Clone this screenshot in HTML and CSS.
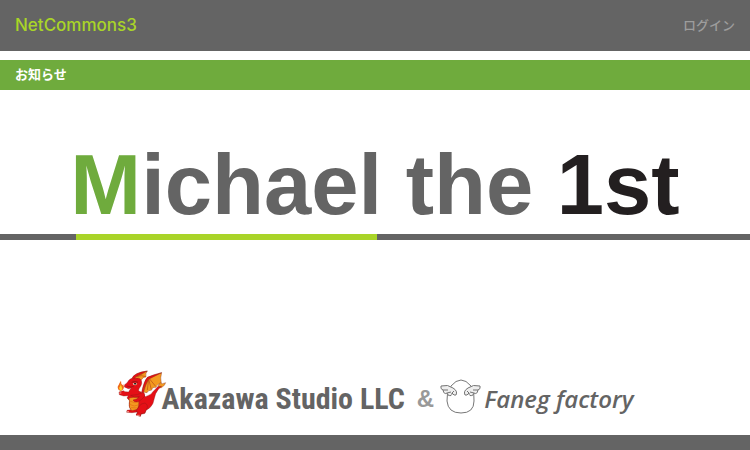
FILE: index.html
```html
<!DOCTYPE html>
<html lang="ja">
<head>
<meta charset="utf-8">
<meta name="viewport" content="width=device-width, initial-scale=1">
<title>NetCommons3</title>
<link rel="stylesheet" href="styles.css">
</head>
<body>
<header class="site-header">
  <a class="brand" href="#">NetCommons3</a>
  <nav><a class="login" href="#">ログイン</a></nav>
</header>
<main class="main">
  <h2 class="notice">お知らせ</h2>
  <section class="hero">
    <h1 class="title"><span class="initial">M</span>ichael the <span class="ordinal">1st</span></h1>
    <div class="rule"><div class="rule-accent"></div></div>
  </section>
  <section class="credits">
    <div class="credit">
      <svg class="dragon" viewBox="24 28 153 141" aria-hidden="true">
        <g stroke="#7b1a16" stroke-width="1" stroke-linejoin="round">
          <path fill="#f39a20" d="M74 53Q78 36 118 31Q112 37 114 49Q105 48 101 57L90 59Z"/>
          <path fill="#f39a20" d="M103 94Q109 60 119 50Q138 42 161 36Q156 51 160 68Q148 69 144 80Q134 77 130 89Q122 87 117 96Z"/>
          <path fill="#e50f16" d="M72 53Q78 36 118 31L89 46Q81 49 79 55ZM101 94Q108 61 118 50Q138 41 161 36Q139 47 123 55Q113 69 106 97Z"/>
          <path fill="#f39a20" d="M150 77L156 66L163 69L173 66L169 74L159 82Z"/>
          <path fill="#e50f16" d="M50 72Q57 69 63 58Q71 50 82 53Q94 49 100 59Q104 69 96 80Q91 85 92 91Q105 94 112 108Q129 103 134 94Q143 85 149 78L161 77Q149 85 143 99Q138 116 135 128Q129 142 114 149L111 158L99 161L97 167L85 163L88 154L72 156L56 155L57 149L69 147Q60 137 65 120L57 112L61 105L47 106L34 102L33 94L41 92L46 90L51 93L62 94Q64 88 70 82L61 84L49 79Z"/>
          <path fill="#f39a20" d="M63 112Q74 109 91 110L92 119Q94 136 88 146L72 150Q62 143 65 128Z"/>
          <path fill="#e50f16" d="M68 104Q89 104 105 95Q113 99 109 108Q101 118 90 123Q78 126 75 118Q86 117 94 108Q80 113 68 104Z"/>
          <path fill="#e50f16" d="M92 139Q98 127 111 127Q123 134 115 147L110 157L99 159L97 167L84 163L90 155L84 151Z"/>
        </g>
        <path d="M65 121L80 126 90 125M64 131L79 136 90 133M69 141L87 142" fill="none" stroke="#e56a13" stroke-width="2"/>
        <path d="M104 89L122 55 118 88M122 55L130 87M124 54L143 77M82 49L100 45 113 48M89 47L106 38" fill="none" stroke="#b94a17" stroke-width="2"/>
        <path d="M56 76L69 79 78 76" fill="none" stroke="#8b1918" stroke-width="2"/>
        <path d="M74 68L84 66 88 70 82 74 76 72Z" fill="#f6d0bb"/>
        <path d="M77 68L84 66 85 71 80 72Z" fill="#24211e"/>
        <path d="M71 65L81 62 90 65" fill="none" stroke="#721b18" stroke-width="2"/>
        <path d="M32 88Q26 79 32 73Q33 68 39 60Q38 70 45 74L45 69Q50 79 46 86L39 91Z" fill="#ef6919"/>
        <path d="M34 86Q32 80 37 76Q38 73 38 70Q42 81 43 85L39 90Z" fill="#ffd21f"/>
        <path d="M57 153h6M87 164h8M34 97h6" stroke="#ffe0c8" stroke-width="2"/>
      </svg>
      <span class="studio">Akazawa Studio LLC</span>
    </div>
    <span class="amp">&amp;</span>
    <div class="credit">
      <svg class="egg" viewBox="0 0 42 36" aria-hidden="true">
        <path fill="#fff" stroke="#777" d="M11 7Q16 1 21 1Q26 1 31 7Q35 14 34 22Q34 34 21 34Q8 34 7 22Q6 14 11 7Z"/>
        <g id="wing" fill="#eee" stroke="#747474">
          <path d="M1 7Q8 5 13 9Q18 12 16 16Q14 17 12 14Q12 18 8 16L7 14Q4 16 3 11Q0 10 1 7Z"/>
          <path fill="none" d="M3 11L8 11M7 14L11 13M12 14L14 12"/>
        </g>
        <use href="#wing" transform="translate(41 0) scale(-1 1)"/>
      </svg>
      <span class="factory">Faneg factory</span>
    </div>
  </section>
</main>
<footer class="site-footer"></footer>
</body>
</html>
```
FILE: styles.css
```css
* {
  box-sizing: border-box;
}

body {
  margin: 0;
  min-height: 100vh;
  display: flex;
  flex-direction: column;
  background: #fff;
  color: #646464;
  font-family: "Liberation Sans", "Noto Sans CJK JP", sans-serif;
}

a {
  text-decoration: none;
}

.site-header {
  display: flex;
  align-items: center;
  justify-content: space-between;
  padding: 15px;
  background: #646464;
}

.brand {
  color: #a9d428;
  font-family: Inter, "Liberation Sans", sans-serif;
  font-size: 17px;
  font-weight: 500;
  line-height: 21px;
}

.login {
  display: block;
  color: #9d9d9d;
  font-size: 13px;
  font-weight: 500;
  line-height: 20px;
}

.main {
  flex: 1;
  padding-top: 9px;
}

.notice {
  margin: 0;
  padding: 0 15px;
  background: #6fab3d;
  color: #fff;
  font-size: 13px;
  line-height: 30px;
}

.hero {
  padding-top: 48px;
}

.title {
  margin: 0;
  padding-bottom: 2px;
  text-align: center;
  font-size: 85px;
  line-height: 94px;
  white-space: nowrap;
}

.initial {
  color: #6fab3d;
}

.ordinal {
  color: #231f20;
}

.rule {
  padding-left: 10.13%;
  background: #646464;
}

.rule-accent {
  width: 44.66%;
  height: 6px;
  background: #a9d428;
}

.credits {
  display: flex;
  justify-content: center;
  align-items: flex-end;
  gap: 12px;
  padding: 130px 0 16px;
  line-height: 40px;
  white-space: nowrap;
}

.credit {
  display: flex;
  align-items: flex-end;
}

.dragon {
  width: 51px;
  height: 47px;
  margin: 0 -6px 2px 0;
}

.studio {
  font-family: "Roboto Condensed", Roboto, sans-serif;
  font-size: 30px;
  font-weight: bold;
}

.amp {
  color: #999;
  font-size: 24px;
  font-weight: bold;
}

.egg {
  width: 42px;
  height: 36px;
  margin: 0 2px 4px -6px;
}

.factory {
  font-family: "Open Sans", sans-serif;
  font-size: 24px;
  font-style: italic;
  font-weight: 600;
}

.site-footer {
  height: 15px;
  background: #646464;
}
```
